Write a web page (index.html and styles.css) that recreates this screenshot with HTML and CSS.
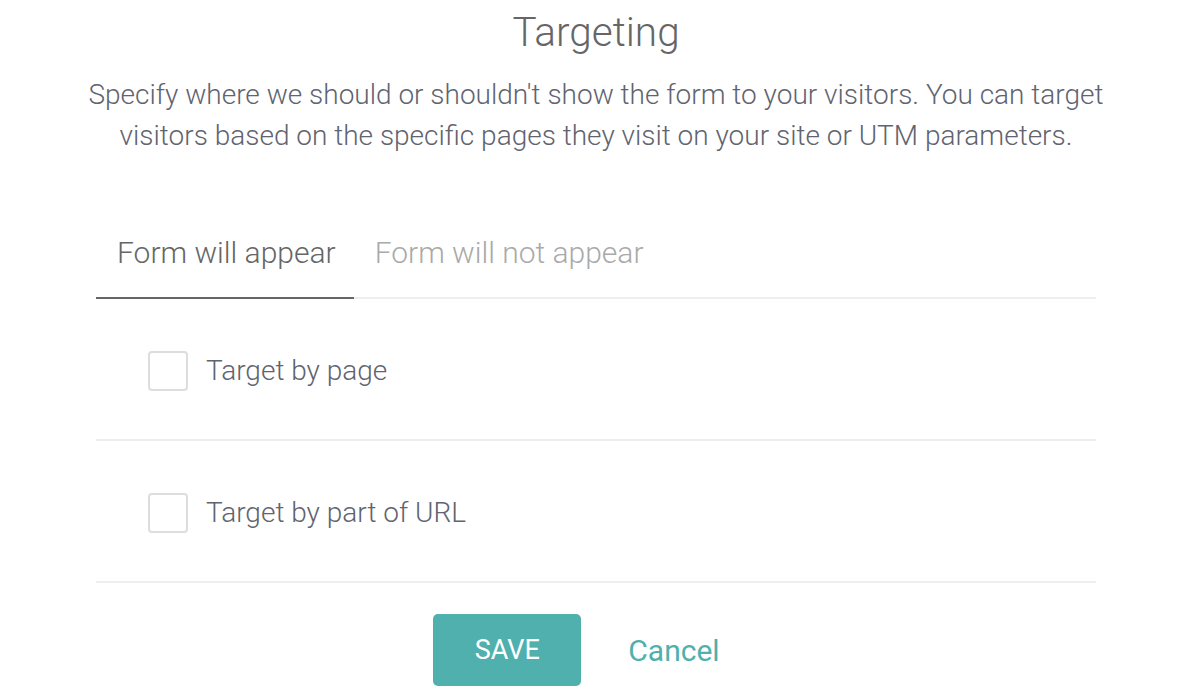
FILE: index.html
```html
<!DOCTYPE html>
<html lang="en">
<head>
<meta charset="utf-8">
<title>Targeting</title>
<link rel="stylesheet" href="styles.css">
</head>
<body>
<main class="panel">
  <h1 class="title">Targeting</h1>
  <p class="desc">Specify where we should or shouldn't show the form to your visitors. You can target visitors based on the specific pages they visit on your site or UTM parameters.</p>
  <div class="tabs">
    <div class="tab active">Form will appear</div>
    <div class="tab">Form will not appear</div>
  </div>
  <div class="row">
    <span class="check"></span>
    <span class="label">Target by page</span>
  </div>
  <div class="row">
    <span class="check"></span>
    <span class="label">Target by part of URL</span>
  </div>
  <div class="actions">
    <button class="save">SAVE</button>
    <a class="cancel">Cancel</a>
  </div>
</main>
</body>
</html>
```

FILE: styles.css
```css
html, body {
  margin: 0;
  padding: 0;
  background: #fff;
}
body {
  font-family: Roboto, "Liberation Sans", sans-serif;
  font-weight: 300;
}
.panel {
  width: 1000px;
  margin: 0 auto;
  display: flex;
  flex-direction: column;
}
.title {
  margin: 8px 0 0;
  text-align: center;
  font-size: 40.5px;
  font-weight: 300;
  line-height: 48px;
  color: #666;
}
.desc {
  margin: 18px -10px 0;
  text-align: center;
  font-size: 28px;
  line-height: 41px;
  color: #5f6470;
}
.tabs {
  margin-top: 53px;
  display: flex;
  border-bottom: 2px solid #eee;
}
.tab {
  padding: 0 18px 0 21px;
  font-size: 30px;
  line-height: 88px;
  color: #aaa;
  margin-bottom: -2px;
  border-bottom: 2px solid transparent;
}
.tab.active {
  color: #666;
  border-bottom-color: #666;
}
.row {
  box-sizing: border-box;
  height: 142px;
  border-bottom: 2px solid #eee;
  display: flex;
  align-items: center;
  padding-left: 52px;
  padding-top: 3px;
  gap: 18px;
}
.check {
  width: 36px;
  height: 36px;
  border: 2px solid #ddd;
  border-radius: 4px;
}
.label {
  font-size: 28px;
  color: #5f6470;
}
.actions {
  margin-top: 31px;
  display: flex;
  justify-content: center;
  align-items: center;
  gap: 47px;
  padding-right: 39px;
}
.save {
  width: 148px;
  height: 72px;
  border: none;
  border-radius: 5px;
  background: #4fb0ae;
  color: #fff;
  font-family: Roboto, "Liberation Sans", sans-serif;
  font-weight: 400;
  font-size: 27px;
}
.cancel {
  font-size: 30px;
  font-weight: 400;
  color: #4fb0ae;
}
```
